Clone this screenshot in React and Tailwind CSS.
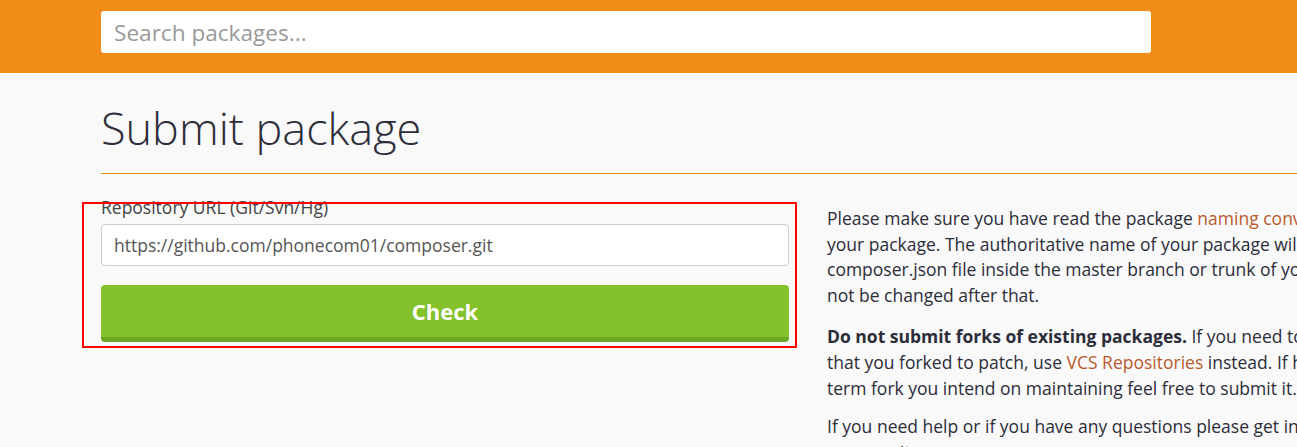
export default function App() {
  return (
    <div className="relative w-[1297px] h-[447px] overflow-hidden bg-[#f9f9f9] text-[#333] font-['Open_Sans',sans-serif]">
      <header className="h-[73px] bg-[#f28d1a] pt-[11px] pl-[101px]">
        <input
          type="text"
          placeholder="Search packages..."
          className="w-[1050px] h-[42px] rounded-[3px] bg-white px-[13px] text-[22.6px] text-[#555] placeholder:text-[#999] outline-none"
        />
      </header>

      <main className="pl-[101px]">
        <h1 className="mt-[27px] text-[45px] leading-[56px] font-light text-[#2d2d3a]">Submit package</h1>
        <hr className="mt-[17px] w-[1400px] border-0 border-t border-[#f28d1a]" />

        <div className="flex mt-[22px]">
          <div className="w-[688px] shrink-0">
            <label className="block text-[17.5px] leading-[22px] text-[#444]">Repository URL (Git/Svn/Hg)</label>
            <input
              type="text"
              defaultValue="https://github.com/phonecom01/composer.git"
              className="mt-[6px] block w-full h-[42px] rounded-[4px] border border-[#ccc] bg-white px-[12px] text-[17.5px] text-[#555] outline-none"
            />
            <button className="mt-[19px] w-full h-[57px] rounded-[4px] bg-[#84c12a] border-b-[5px] border-[#6aa823] text-white text-[22px] font-bold">
              Check
            </button>
          </div>

          <div className="ml-[38px] w-[698px] shrink-0 text-[17.5px] leading-[25.6px] text-[#2d2d3a]">
            <p className="mt-[10px] mb-[16px]">
              Please make sure you have read the package{" "}
              <a href="#" className="text-[#b95b2c]">naming conventions</a> before submitting your package. The
              authoritative name of your package will be taken from the composer.json file inside the master branch
              or trunk of your repository, and it can not be changed after that.
            </p>
            <p className="mb-[13px]">
              <strong className="font-bold">Do not submit forks of existing packages.</strong> If you need to test
              changes to a package that you forked to patch, use{" "}
              <a href="#" className="text-[#b95b2c]">VCS Repositories</a> instead. If however it is a real long-term
              fork you intend on maintaining feel free to submit it.
            </p>
            <p>
              If you need help or if you have any questions please get in touch with the Composer community.
            </p>
          </div>
        </div>
      </main>

      <div className="absolute left-[82px] top-[202px] w-[715px] h-[146px] border-2 border-[#ff0000] pointer-events-none" />
    </div>
  );
}
